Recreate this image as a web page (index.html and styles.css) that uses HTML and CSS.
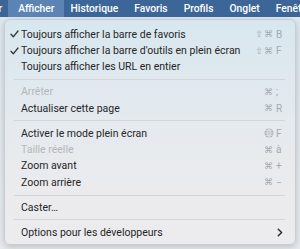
FILE: index.html
```html
<!DOCTYPE html>
<html lang="fr">
<head>
    <meta charset="UTF-8">
    <meta name="viewport" content="width=device-width, initial-scale=1.0">
    <title>Afficher</title>
    <link rel="stylesheet" href="styles.css">
</head>
<body>
    <div class="menubar">
        <span class="bar-item first">Fichier</span>
        <span class="bar-item active">Afficher</span>
        <span class="bar-item">Historique</span>
        <span class="bar-item">Favoris</span>
        <span class="bar-item">Profils</span>
        <span class="bar-item">Onglet</span>
        <span class="bar-item">Fenêtre</span>
    </div>

    <div class="menu">
        <div class="row">
            <span class="check"><svg width="9" height="8" viewBox="0 0 9 8"><path d="M1 4.3 L3.3 6.8 L8 1" fill="none" stroke="#333" stroke-width="1.3" stroke-linecap="round" stroke-linejoin="round"/></svg></span>
            <span class="label">Toujours afficher la barre de favoris</span>
            <span class="keys"><span class="mods">⇧⌘</span><span class="key">B</span></span>
        </div>
        <div class="row">
            <span class="check"><svg width="9" height="8" viewBox="0 0 9 8"><path d="M1 4.3 L3.3 6.8 L8 1" fill="none" stroke="#333" stroke-width="1.3" stroke-linecap="round" stroke-linejoin="round"/></svg></span>
            <span class="label">Toujours afficher la barre d'outils en plein écran</span>
            <span class="keys"><span class="mods">⇧⌘</span><span class="key">F</span></span>
        </div>
        <div class="row">
            <span class="check"></span>
            <span class="label">Toujours afficher les URL en entier</span>
        </div>
        <div class="sep"></div>
        <div class="row disabled">
            <span class="check"></span>
            <span class="label">Arrêter</span>
            <span class="keys"><span class="mods">⌘</span><span class="key">;</span></span>
        </div>
        <div class="row">
            <span class="check"></span>
            <span class="label">Actualiser cette page</span>
            <span class="keys"><span class="mods">⌘</span><span class="key">R</span></span>
        </div>
        <div class="sep"></div>
        <div class="row">
            <span class="check"></span>
            <span class="label">Activer le mode plein écran</span>
            <span class="keys">
                <span class="mods"><svg class="globe" width="10" height="10" viewBox="0 0 10 10"><circle cx="5" cy="5" r="4.5" fill="#a9adb3"/><g fill="none" stroke="#eef0f2" stroke-width="0.7"><ellipse cx="5" cy="5" rx="1.9" ry="4.4"/><line x1="5" y1="0.5" x2="5" y2="9.5"/><line x1="0.5" y1="5" x2="9.5" y2="5"/><path d="M1.3 2.7 H8.7 M1.3 7.3 H8.7"/></g></svg></span><span class="key">F</span>
            </span>
        </div>
        <div class="row disabled">
            <span class="check"></span>
            <span class="label">Taille réelle</span>
            <span class="keys"><span class="mods">⌘</span><span class="key">à</span></span>
        </div>
        <div class="row">
            <span class="check"></span>
            <span class="label">Zoom avant</span>
            <span class="keys"><span class="mods">⌘</span><span class="key">+</span></span>
        </div>
        <div class="row">
            <span class="check"></span>
            <span class="label">Zoom arrière</span>
            <span class="keys"><span class="mods">⌘</span><span class="key">−</span></span>
        </div>
        <div class="sep"></div>
        <div class="row">
            <span class="check"></span>
            <span class="label">Caster…</span>
        </div>
        <div class="sep"></div>
        <div class="row">
            <span class="check"></span>
            <span class="label">Options pour les développeurs</span>
            <span class="arrow"><svg width="6" height="9" viewBox="0 0 6 9"><path d="M1.3 1.2 L4.6 4.5 L1.3 7.8" fill="none" stroke="#2b2b2b" stroke-width="1.5" stroke-linecap="round" stroke-linejoin="round"/></svg></span>
        </div>
    </div>
</body>
</html>
```

FILE: styles.css
```css
body {
    margin: 0;
    width: 300px;
    height: 249px;
    overflow: hidden;
    font-family: Roboto, "Noto Sans", sans-serif;
    background: linear-gradient(#dce7ee, #e6eaee);
}
.menubar {
    display: flex;
    height: 17px;
    align-items: stretch;
    background-color: #3d6698;
    color: white;
    font-size: 10.3px;
    font-weight: 500;
    white-space: nowrap;
    overflow: hidden;
}
.bar-item {
    display: flex;
    align-items: center;
    padding: 0 8px;
}
.bar-item.first {
    margin-left: -37px;
}
.bar-item.active {
    background-color: #5b84b4;
    padding: 0 10px;
    margin: 0 -2px;
}
.menu {
    margin: 2px 0 0 4px;
    width: 292px;
    padding: 6px 0 4px;
    box-sizing: border-box;
    border-radius: 6px;
    border: 1px solid #c9ccd0;
    background: linear-gradient(#d8e7ef 0%, #e4eaee 45%, #ebebee 75%, #ececef 100%);
    box-shadow: 0 2px 6px rgba(0, 0, 0, 0.18);
    font-size: 10.5px;
    color: #262626;
}
.row {
    display: flex;
    align-items: center;
    height: 16.4px;
    padding: 0 11px 0 5px;
}
.row.disabled {
    color: #b3b7bc;
}
.check {
    width: 11px;
    flex-shrink: 0;
    display: flex;
    align-items: center;
}
.label {
    flex: 1;
    white-space: nowrap;
}
.keys {
    display: flex;
    align-items: center;
    color: #a5a9af;
    font-family: "DejaVu Sans", sans-serif;
    font-size: 9px;
}
.mods {
    display: flex;
    align-items: center;
    letter-spacing: 1px;
}
.key {
    width: 8px;
    margin-left: 2px;
    font-family: Roboto, sans-serif;
    font-size: 10px;
}
.arrow {
    display: flex;
    align-items: center;
    padding-right: 1px;
}
.sep {
    height: 1px;
    margin: 4px 10px 3.5px 9px;
    background-color: #d3d5d9;
}
```
